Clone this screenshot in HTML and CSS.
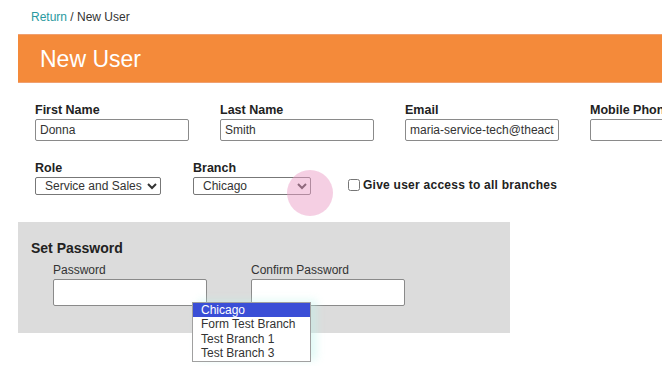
FILE: index.html
```html
<!DOCTYPE html>
<html>
<head>
  <title>New User</title>
  <meta name="viewport" content="width=device-width, initial-scale=1.0">
  <link rel="stylesheet" href="styles.css">
</head>
<body>
  <div class="page">
    <div class="breadcrumb">
      <a href="#" class="return">Return</a> / New User
    </div>
    <div class="header">
      <h1>New User</h1>
    </div>

    <div class="form-row">
      <div class="field">
        <label>First Name</label>
        <input type="text" class="text-input" value="Donna">
      </div>
      <div class="field">
        <label>Last Name</label>
        <input type="text" class="text-input" value="Smith">
      </div>
      <div class="field">
        <label>Email</label>
        <input type="text" class="text-input" value="maria-service-tech@theactivecompany.com">
      </div>
      <div class="field">
        <label>Mobile Phone</label>
        <input type="text" class="text-input" value="">
      </div>
    </div>

    <div class="form-row second">
      <div class="field">
        <label>Role</label>
        <select class="select role">
          <option>Service and Sales</option>
        </select>
      </div>
      <div class="field branch-field">
        <label>Branch</label>
        <select class="select branch">
          <option>Chicago</option>
        </select>
        <div class="click-marker"></div>
        <ul class="dropdown">
          <li class="selected">Chicago</li>
          <li>Form Test Branch</li>
          <li>Test Branch 1</li>
          <li>Test Branch 3</li>
        </ul>
      </div>
      <label class="check">
        <input type="checkbox">
        <span>Give user access to all branches</span>
      </label>
    </div>

    <div class="password-box">
      <h2>Set Password</h2>
      <div class="password-row">
        <div class="pw-field">
          <label>Password</label>
          <input type="password" class="pw-input">
        </div>
        <div class="pw-field">
          <label>Confirm Password</label>
          <input type="password" class="pw-input">
        </div>
      </div>
    </div>
  </div>
</body>
</html>
```

FILE: styles.css
```css
* {
  margin: 0;
  padding: 0;
  box-sizing: border-box;
}

body {
  font-family: "Liberation Sans", Arial, sans-serif;
  color: #222;
  background: #fff;
  overflow: hidden;
  min-height: 366px;
}

.page {
  width: 720px;
  min-height: 366px;
  padding-left: 18px;
}

.breadcrumb {
  font-size: 12px;
  line-height: 14px;
  padding: 10px 0 10px 13px;
  color: #333;
}

.return {
  color: #2a9aa0;
  text-decoration: none;
}

.header {
  background: #f48a3a;
  border-top: 1px solid #f0a070;
  border-bottom: 1px solid #f0a070;
  height: 49px;
  display: flex;
  align-items: center;
  padding-left: 22px;
}

.header h1 {
  color: #fff;
  font-size: 23px;
  font-weight: normal;
  line-height: 26px;
}

.form-row {
  display: flex;
  gap: 31px;
  margin: 20px 0 0 17px;
}

.form-row.second {
  margin-top: 20px;
  gap: 32px;
  align-items: flex-end;
}

.field {
  display: flex;
  flex-direction: column;
  gap: 1px;
}

.field label {
  font-size: 12.5px;
  font-weight: bold;
  line-height: 15px;
  color: #222;
}

.text-input {
  width: 154px;
  height: 22px;
  border: 1px solid #8a8a8a;
  border-radius: 2px;
  padding: 0 4px;
  font-family: inherit;
  font-size: 12px;
  color: #333;
  background: #fff;
}

.select {
  height: 18px;
  border: 1px solid #777;
  border-radius: 2px;
  font-family: inherit;
  font-size: 12px;
  color: #333;
  background: #fff;
  padding: 0 2px 0 5px;
}

.select.role {
  width: 126px;
}

.select.branch {
  width: 118px;
}

.branch-field {
  position: relative;
}

.click-marker {
  position: absolute;
  left: 94px;
  top: 9px;
  width: 46px;
  height: 46px;
  border-radius: 50%;
  background: rgba(236, 160, 200, 0.5);
  z-index: 2;
}

.dropdown {
  position: absolute;
  left: -1px;
  top: 141px;
  width: 119px;
  list-style: none;
  background: #fff;
  border: 1px solid #a0a0a0;
  box-shadow: 6px -2px 8px rgba(190, 245, 235, 0.45);
  z-index: 3;
  font-size: 12px;
  line-height: 14.4px;
  color: #333;
}

.dropdown li {
  padding-left: 8px;
}

.dropdown li.selected {
  background: #3a4ed6;
  color: #fff;
}

.check {
  display: flex;
  align-items: center;
  gap: 3px;
  margin-left: 5px;
  margin-bottom: 3px;
  font-size: 12px;
  font-weight: bold;
  color: #222;
  letter-spacing: 0.25px;
}

.check input {
  width: 12px;
  height: 12px;
  margin: 0;
}

.password-box {
  margin-top: 27px;
  width: 492px;
  background: #dcdcdc;
  padding: 18px 13px 27px;
}

.password-box h2 {
  font-size: 14px;
  font-weight: bold;
  line-height: 16px;
  color: #222;
}

.password-row {
  display: flex;
  gap: 44px;
  margin: 7px 0 0 22px;
}

.pw-field {
  display: flex;
  flex-direction: column;
  gap: 2px;
}

.pw-field label {
  font-size: 12px;
  line-height: 14px;
  color: #333;
}

.pw-input {
  width: 154px;
  height: 27px;
  border: 1px solid #8a8a8a;
  border-radius: 2px;
  background: #fff;
}
```
